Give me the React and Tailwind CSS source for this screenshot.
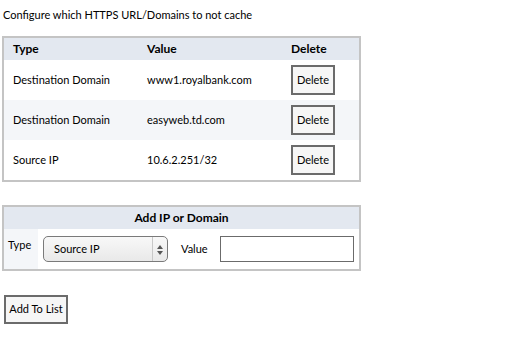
import { useState } from 'react';

const ENTRIES = [
  { id: 1, type: 'Destination Domain', value: 'www1.royalbank.com' },
  { id: 2, type: 'Destination Domain', value: 'easyweb.td.com' },
  { id: 3, type: 'Source IP', value: '10.6.2.251/32' },
];

const DeleteButton = () => (
  <button className="h-[30px] w-[44px] border-2 border-[#6b6b6b] bg-[#f6f6f6] text-[11px] text-black">
    Delete
  </button>
);

const App = () => {
  const [type, setType] = useState('Source IP');

  return (
    <div
      className="h-[337px] w-[525px] bg-white text-[11px] text-black"
      style={{ fontFamily: 'Lato, "Open Sans", sans-serif' }}
    >
      <p className="pl-[3px] pt-[7px] leading-[16px]">Configure which HTTPS URL/Domains to not cache</p>

      <div className="ml-[2px] mt-[13px] w-[359px] border-2 border-[#c4c4c4]">
        <div className="grid h-[22px] grid-cols-[134px_144px_1fr] items-center bg-[#e3e8f0] text-[12px] font-bold">
          <span className="pl-[9px]">Type</span>
          <span className="pl-[9px]">Value</span>
          <span className="pl-[9px]">Delete</span>
        </div>
        {ENTRIES.map((e, i) => (
          <div
            key={e.id}
            className={`grid h-[40px] grid-cols-[134px_144px_1fr] items-center ${i % 2 === 1 ? 'bg-[#f4f6f9]' : 'bg-white'}`}
          >
            <span className="pl-[9px]">{e.type}</span>
            <span className="pl-[9px]">{e.value}</span>
            <span className="pl-[9px]">
              <DeleteButton />
            </span>
          </div>
        ))}
      </div>

      <div className="ml-[2px] mt-[23px] w-[359px] border-2 border-[#c4c4c4]">
        <div className="flex h-[22px] items-center justify-center bg-[#e3e8f0] text-[12px] font-bold">
          Add IP or Domain
        </div>
        <div className="flex h-[40px] items-center">
          <div className="flex h-full w-[34px] items-center bg-[#f4f6f9] pl-[4px] pb-[8px]">Type</div>
          <div className="relative ml-[5px] h-[26px] w-[125px] rounded-[5px] border border-[#7a7a7a] bg-gradient-to-b from-[#f8f8f8] to-[#e9e9e9]">
            <select
              value={type}
              onChange={(ev) => setType(ev.target.value)}
              className="h-full w-full appearance-none bg-transparent pl-[10px] text-[11px] outline-none"
            >
              <option>Source IP</option>
              <option>Destination Domain</option>
            </select>
            <div className="pointer-events-none absolute right-[14px] top-0 h-full border-l border-[#c8c8c8]" />
            <svg className="pointer-events-none absolute right-[4px] top-[8px]" width="6" height="10" viewBox="0 0 6 10">
              <path d="M0 4 L3 0 L6 4 Z" fill="#555" />
              <path d="M0 6 L3 10 L6 6 Z" fill="#555" />
            </svg>
          </div>
          <span className="ml-[13px]">Value</span>
          <input className="ml-[12px] h-[26px] w-[134px] border-[1.5px] border-[#6b6b6b] outline-none" />
        </div>
      </div>

      <button className="ml-[4px] mt-[24px] h-[29px] w-[64px] border-2 border-[#6b6b6b] bg-[#f6f6f6] text-[11px]">
        Add To List
      </button>
    </div>
  );
};

export default App;
